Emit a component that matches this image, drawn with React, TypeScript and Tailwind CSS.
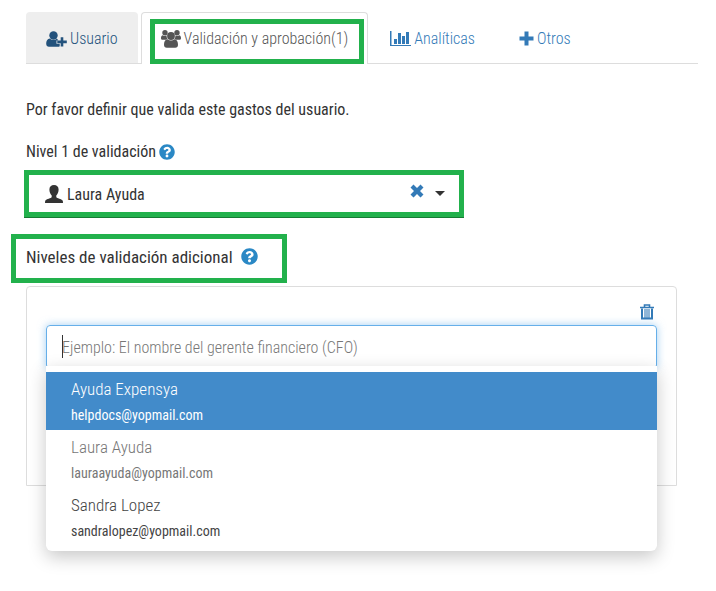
import type { ReactNode } from 'react';
import { FaQuestionCircle } from 'react-icons/fa';

const suggestions = [
  { name: 'Ayuda Expensya', email: 'helpdocs@yopmail.com' },
  { name: 'Laura Ayuda', email: 'lauraayuda@yopmail.com' },
  { name: 'Sandra Lopez', email: 'sandralopez@yopmail.com' },
];

const rowColors = ['bg-[#428bca] text-white', 'bg-white text-[#777777]', 'bg-white text-[#444444]'];

const UserPlusIcon = () => (
  <svg viewBox="0 0 21 16" className="h-4 w-[21px] shrink-0" fill="currentColor" aria-hidden="true">
    <circle cx="7.5" cy="4.5" r="4.2" />
    <path d="M4 7.600C1.200 8 .2 10 .2 12.500.2 14.600 1.300 15.700 3 15.700h9c.7 0 1.300-.1 1.700-.5v-2.500H10.500V9.500h1.600c-.3-.9-.7-1.500-1.300-1.900C9 9.600 6 9.600 4 7.600z" />
    <path d="M14.700 6.200h2.600v3.400h3.500v2.600h-3.500v3.400h-2.600v-3.400h-3.400V9.600h3.400z" />
  </svg>
);

const UsersIcon = () => (
  <svg viewBox="0 0 20 18" className="h-[18px] w-5 shrink-0" fill="currentColor" aria-hidden="true">
    <circle cx="4" cy="2.800" r="2.700" />
    <circle cx="16" cy="2.800" r="2.700" />
    <path d="M1.600 5.300C.3 5.800 0 7 0 8.300 0 9.300.7 9.800 1.700 9.800h3.400C5.600 9.300 6 9 6.500 8.800 5.700 7.800 5.500 6.800 5.600 5.600c-1.300.7-2.800.6-4-.3zM18.400 5.300C19.700 5.800 20 7 20 8.300c0 1-.7 1.500-1.700 1.500h-3.400c-.5-.5-.9-.8-1.400-1 .8-1 1-2 .9-3.200 1.300.7 2.800.6 4-.3z" />
    <circle cx="10" cy="6" r="3.900" />
    <path d="M6.600 9.300C4 9.600 3 12 3 14.800c0 1.900 1 2.900 2.800 2.900h8.400c1.800 0 2.800-1 2.800-2.900 0-2.800-1-5.200-3.600-5.500-2 1.600-4.800 1.600-6.800 0z" />
  </svg>
);

const ChartIcon = () => (
  <svg viewBox="0 0 21 16" className="h-4 w-[21px] shrink-0" fill="currentColor" aria-hidden="true">
    <path d="M0 0h1.500v14H21v1H0zM4 8h3v5H4zM8 2h3v11H8zM12 5h3v8h-3zM16 1h3v12h-3z" />
  </svg>
);

const PlusIcon = () => (
  <svg viewBox="0 0 15 15" className="size-[15px] shrink-0" fill="currentColor" aria-hidden="true">
    <path d="M5.500.5h4v5h5v4h-5v5h-4v-5h-5v-4h5z" />
  </svg>
);

const PersonIcon = () => (
  <svg viewBox="0 0 18 18" className="size-[18px] shrink-0" fill="currentColor" aria-hidden="true">
    <path d="M9 0c2.800 0 4.600 1.700 4.600 4.500 0 2.300-.8 4.700-2.300 6v1.800c.4.8 5.300 1.900 6.300 3.200.3.500.4 1.500.4 2.500H0c0-1 .1-2 .4-2.500 1-1.300 5.900-2.400 6.300-3.200v-1.800c-1.500-1.300-2.300-3.700-2.300-6C4.400 1.700 6.200 0 9 0z" />
  </svg>
);

const CrossIcon = () => (
  <svg viewBox="0 0 14 14" className="size-[14px]" fill="currentColor" aria-hidden="true">
    <path d="M3.500.5 7 4 10.500.5l3 3L10 7l3.500 3.500-3 3L7 10l-3.500 3.500-3-3L4 7 .5 3.500z" />
  </svg>
);

const TrashIcon = () => (
  <svg viewBox="0 0 14 16" className="h-4 w-[14px]" fill="none" stroke="currentColor" aria-hidden="true">
    <path d="M0 3.500h14M4.500 3V1h5v2" strokeWidth="1.600" />
    <path d="M2 4.500v10h10v-10" strokeWidth="2" />
    <path d="M5 5v9M7 5v9M9 5v9" strokeWidth="1.100" />
  </svg>
);

const Tab = ({ icon, children }: { icon: ReactNode; children: ReactNode }) => (
  <button className="flex h-[51px] items-center gap-[3px] px-[22px] pt-[2px] text-[#337ab7]">
    {icon}
    {children}
  </button>
);

const App = () => {
  return (
    <main className="min-h-screen bg-white pt-3 pr-[18px] pb-10 pl-[11px] font-['Roboto_Condensed','Liberation_Sans_Narrow',sans-serif] text-base leading-6 text-[#333333]">
      {/* Tabs */}
      <nav className="ml-[15px] flex h-[52px] whitespace-nowrap border-b border-[#dddddd] font-light">
        <button className="mr-[3px] flex h-[51px] items-center gap-[3px] rounded-t bg-[#eeeeee] px-5 pt-[2px] text-[#23527c]">
          <UserPlusIcon />
          Usuario
        </button>
        <button className="h-[52px] rounded-t border border-b-0 border-[#dddddd] bg-white pt-[6px] pr-[3px] pl-2 text-[#555555]">
          <span className="flex h-[45px] items-center gap-[3px] border-[5px] border-[#22b14c] pr-[11px] pb-[6px] pl-[6px]">
            <UsersIcon />
            Validación y aprobación(1)
          </span>
        </button>
        <Tab icon={<ChartIcon />}>Analíticas</Tab>
        <Tab icon={<PlusIcon />}>Otros</Tab>
      </nav>

      <p className="mt-[34px] ml-[15px]">Por favor definir que valida este gastos del usuario.</p>

      {/* First level */}
      <label htmlFor="level-one" className="mt-[18px] ml-[15px] flex items-center gap-[3px]">
        Nivel 1 de validación
        <FaQuestionCircle className="size-4 text-[#2a88c5]" />
      </label>
      <div className="mt-[6px] ml-[13px] flex h-[47px] max-w-[440px] items-center border-[5px] border-[#22b14c] pl-4 shadow-[0_1px_0_#167a33]">
        <PersonIcon />
        <select id="level-one" className="min-w-0 flex-1 appearance-none bg-transparent pt-[2px] pl-1 outline-none">
          <option>Laura Ayuda</option>
        </select>
        <button aria-label="Quitar" className="mr-[11px] mb-[6px] text-[#337ab7]">
          <CrossIcon />
        </button>
        <svg viewBox="0 0 10 5" className="mr-[14px] h-[5px] w-[10px]" fill="currentColor" aria-hidden="true">
          <path d="M0 0h10L5 5z" />
        </svg>
      </div>

      {/* Additional levels */}
      <div className="mt-[17px] flex h-[49px] max-w-[276px] items-center gap-2 border-[5px] border-[#22b14c] pb-1 pl-[10px]">
        <h2 id="extra-levels" className="text-[17px] leading-6">Niveles de validación adicional</h2>
        <FaQuestionCircle className="size-[17px] text-[#2a88c5]" />
      </div>
      <section className="mt-[3px] mr-[21px] ml-[15px] h-50 rounded-t border border-[#dddddd] px-[19px] pt-[17px]">
        <div className="flex h-[21px] justify-end pr-[3px]">
          <button aria-label="Eliminar" className="h-4 text-[#337ab7]">
            <TrashIcon />
          </button>
        </div>
        <div className="relative">
          <input
            aria-labelledby="extra-levels"
            placeholder="Ejemplo: El nombre del gerente financiero (CFO)"
            className="h-11 w-full rounded border border-[#66afe9] px-[15px] font-light caret-transparent shadow-[0_0_8px_rgba(102,175,233,0.6)] outline-none placeholder:text-[#777777]"
          />
          <span className="absolute top-[10px] left-4 h-[23px] w-px bg-[#333333]" />
          <ul className="absolute top-[41px] left-0 w-full rounded-b-md bg-white pt-[6px] pb-[5px] shadow-[0_6px_18px_rgba(0,0,0,0.22)]">
            {suggestions.map((person, i) => (
              <li key={person.email}>
                <button className={`block h-[58px] w-full px-[25px] pt-px text-left ${rowColors[i]}`}>
                  <span className="block text-[17px] leading-[26px] font-light">{person.name}</span>
                  <span className="block text-sm leading-[26px]">{person.email}</span>
                </button>
              </li>
            ))}
          </ul>
        </div>
      </section>
    </main>
  );
};

export default App;
